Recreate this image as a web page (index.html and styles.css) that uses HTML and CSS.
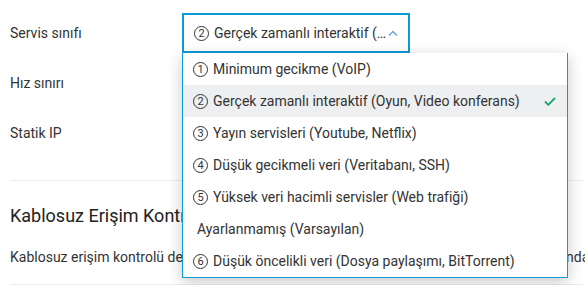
FILE: index.html
```html
<!DOCTYPE html>
<html lang="tr">
<head>
  <meta charset="UTF-8">
  <meta name="viewport" content="width=device-width, initial-scale=1.0">
  <title>Servis ayarları</title>
  <link rel="stylesheet" href="styles.css">
</head>
<body>
  <div class="settings">
    <div class="form-row">
      <label class="form-label">Servis sınıfı</label>
      <div class="select-wrap">
        <div class="select">
          <span class="num">2</span>
          <span class="select-value">Gerçek zamanlı interaktif (Oyun, Video konferans)</span>
          <svg class="caret" width="10" height="6" viewBox="0 0 10 6">
            <path d="M1 5.5 L5 1.5 L9 5.5" fill="none" stroke="#6aa3d9" stroke-width="1.4"/>
          </svg>
        </div>
        <ul class="dropdown">
          <li><span class="num">1</span>Minimum gecikme (VoIP)</li>
          <li class="selected"><span class="num">2</span>Gerçek zamanlı interaktif (Oyun, Video konferans)
            <svg class="check" width="12" height="9" viewBox="0 0 12 9">
              <path d="M1 4.5 L4.3 7.8 L11 1" fill="none" stroke="#1aa56c" stroke-width="1.8"/>
            </svg>
          </li>
          <li><span class="num">3</span>Yayın servisleri (Youtube, Netflix)</li>
          <li><span class="num">4</span>Düşük gecikmeli veri (Veritabanı, SSH)</li>
          <li><span class="num">5</span>Yüksek veri hacimli servisler (Web trafiği)</li>
          <li class="plain">Ayarlanmamış (Varsayılan)</li>
          <li><span class="num">6</span>Düşük öncelikli veri (Dosya paylaşımı, BitTorrent)</li>
        </ul>
      </div>
    </div>
    <div class="form-row">
      <label class="form-label">Hız sınırı</label>
    </div>
    <div class="form-row">
      <label class="form-label">Statik IP</label>
    </div>

    <hr class="divider">

    <h2 class="section-title">Kablosuz Erişim Kontrolü</h2>
    <p class="section-text">Kablosuz erişim kontrolü devre dışı bırakıldığında tüm cihazlar bağlanabilir, ağ açık olduğunda yalnızca izinli cihazlar bağlanabilir.</p>

    <hr class="divider">
  </div>
</body>
</html>
```
FILE: styles.css
```css
body {
  margin: 0;
  font-family: Roboto, "Liberation Sans", sans-serif;
  font-size: 14px;
  color: #333;
  background-color: #fff;
  overflow: hidden;
}

.settings {
  padding: 13px 0 0 10px;
}

.form-row {
  display: flex;
  align-items: center;
  height: 40px;
  margin-bottom: 10px;
}

.form-label {
  width: 172px;
  flex-shrink: 0;
}

.select-wrap {
  position: relative;
  z-index: 2;
}

.select {
  display: flex;
  align-items: center;
  box-sizing: border-box;
  width: 228px;
  height: 40px;
  padding: 0 10px 0 10px;
  border: 2px solid #0e9ad7;
  background-color: #fff;
}

.select-value {
  flex: 1;
  min-width: 0;
  white-space: nowrap;
  overflow: hidden;
  text-overflow: ellipsis;
}

.caret {
  margin-left: 1px;
  flex-shrink: 0;
}

.num {
  display: inline-flex;
  align-items: center;
  justify-content: center;
  flex-shrink: 0;
  box-sizing: border-box;
  width: 15px;
  height: 15px;
  margin-right: 5px;
  border: 1px solid #333;
  border-radius: 50%;
  font-size: 11px;
  line-height: 1;
}

.dropdown {
  position: absolute;
  top: 40px;
  left: 0;
  width: 386px;
  box-sizing: border-box;
  margin: 0;
  padding: 0;
  list-style: none;
  background-color: #fff;
  border: 1px solid #0e9ad7;
  border-top: none;
  box-shadow: 0px 4px 14px rgba(0, 0, 0, 0.22);
}

.dropdown li {
  display: flex;
  align-items: center;
  height: 32px;
  padding: 0 11px 0 10px;
  white-space: nowrap;
}

.dropdown li.selected {
  background-color: #eeeff0;
}

.dropdown li.plain {
  padding-left: 14px;
}

.check {
  margin-left: auto;
}

.divider {
  margin: 27px 0 0 0;
  border: none;
  border-top: 1px solid #ececec;
}

.section-title {
  margin: 23px 0 0 0;
  font-size: 18px;
  font-weight: 400;
  line-height: 24px;
  color: #222;
}

.section-text {
  margin: 19px 0 0 0;
  line-height: 20px;
  white-space: nowrap;
  overflow: hidden;
}

.section-text + .divider {
  margin-top: 17px;
}
```
